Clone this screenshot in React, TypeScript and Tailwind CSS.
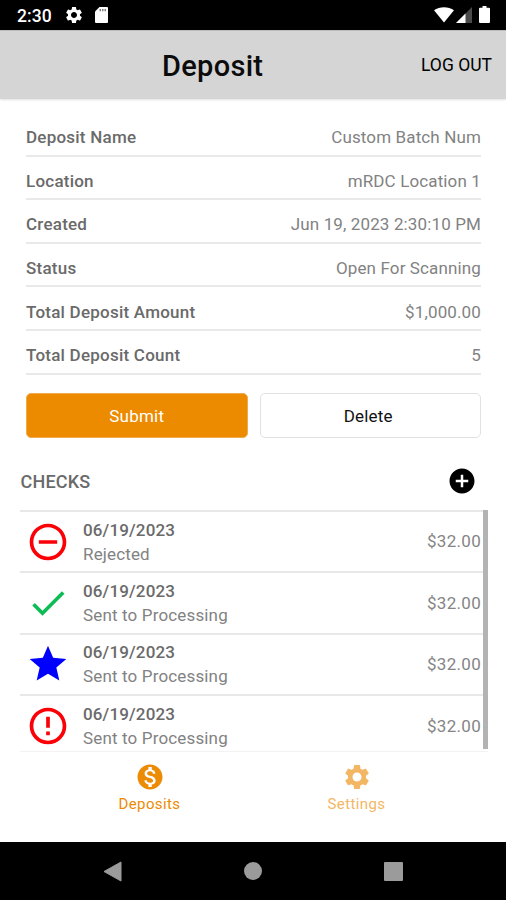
import { clsx } from 'clsx';
import type { IconType } from 'react-icons';
import {
  MdAddCircle,
  MdCheck,
  MdErrorOutline,
  MdMonetizationOn,
  MdRemoveCircleOutline,
  MdSettings,
  MdStar,
} from 'react-icons/md';

const DETAILS = [
  { label: 'Deposit Name', value: 'Custom Batch Num' },
  { label: 'Location', value: 'mRDC Location 1' },
  { label: 'Created', value: 'Jun 19, 2023 2:30:10 PM' },
  { label: 'Status', value: 'Open For Scanning' },
  { label: 'Total Deposit Amount', value: '$1,000.00' },
  { label: 'Total Deposit Count', value: '5' },
];

type Check = {
  icon: IconType;
  color: string;
  date: string;
  status: string;
  amount: string;
};

const CHECKS: Check[] = [
  { icon: MdRemoveCircleOutline, color: 'text-[#fb0007]', date: '06/19/2023', status: 'Rejected', amount: '$32.00' },
  { icon: MdCheck, color: 'text-[#0cbc55]', date: '06/19/2023', status: 'Sent to Processing', amount: '$32.00' },
  { icon: MdStar, color: 'text-[#0000fe]', date: '06/19/2023', status: 'Sent to Processing', amount: '$32.00' },
  { icon: MdErrorOutline, color: 'text-[#fb0007]', date: '06/19/2023', status: 'Sent to Processing', amount: '$32.00' },
];

function StatusBar() {
  return (
    <div className="flex h-[30px] shrink-0 items-center bg-black pl-[17px] pr-4 text-white">
      <span className="w-[47px] pt-[3px] text-[17.5px] font-medium leading-none tracking-[0.1px]">2:30</span>
      <MdSettings size={20} aria-hidden="true" />
      <svg className="ml-[11px] h-4 w-[13px]" viewBox="0 0 13 16" aria-hidden="true">
        <path fill="currentColor" d="M4.5 0H12a1 1 0 0 1 1 1v14a1 1 0 0 1-1 1H1a1 1 0 0 1-1-1V4.5z" />
        <path fill="#000" opacity=".5" d="M4.5 2H6v2.2H4.5zM7 2h1.5v2.2H7zM9.5 2H11v2.2H9.5z" />
      </svg>
      <div className="ml-auto flex items-center">
        <svg className="mb-px h-4 w-5" viewBox="0 0 20 16" aria-hidden="true">
          <path fill="currentColor" d="M10 15.5 0 3.2C5.5-.9 14.5-.9 20 3.2z" />
        </svg>
        <svg className="ml-0.5 h-4 w-4" viewBox="0 0 16 16" aria-hidden="true">
          <path fill="#4a4a4a" d="M0 16 16 0v16z" />
          <path fill="currentColor" d="M0 16 9.5 6.5V16z" />
        </svg>
        <svg className="ml-[7px] mb-px h-[17px] w-[11px]" viewBox="0 0 11 17" aria-hidden="true">
          <path fill="currentColor" d="M3.5 0h4v1.7H10a1 1 0 0 1 1 1V16a1 1 0 0 1-1 1H1a1 1 0 0 1-1-1V2.7a1 1 0 0 1 1-1h2.5z" />
        </svg>
      </div>
    </div>
  );
}

function Header() {
  return (
    <header className="flex h-[69px] shrink-0 items-center justify-between border-t border-[#bdbdbd] bg-[#d5d5d5] pl-[162px] pr-[14px] shadow-[0_1px_2px_rgba(0,0,0,0.12)]">
      <h1 className="pt-[3px] text-[29px] font-medium leading-none tracking-[0.3px] text-[#0c0c0c]">Deposit</h1>
      <button type="button" className="pt-px text-[17.5px] leading-none text-black">
        LOG OUT
      </button>
    </header>
  );
}

function CheckRow({ check }: { check: Check }) {
  const Icon = check.icon;
  return (
    <li className="flex h-[61.4px] items-center border-t-2 border-[#e8e8e8] pl-1.5 pr-[7px]">
      <Icon size={44} className={clsx('shrink-0', check.color)} aria-hidden="true" />
      <div className="ml-[13px] flex-1 leading-6">
        <div className="text-[17px] font-medium tracking-[0.15px] text-[#6a6a6a]">{check.date}</div>
        <div className="text-[17px] tracking-[0.15px] text-[#828282]">{check.status}</div>
      </div>
      <span className="pt-px text-[17px] tracking-[0.3px] text-[#858585]">{check.amount}</span>
    </li>
  );
}

function TabBar() {
  return (
    <nav className="flex h-[90px] shrink-0 px-[46px] pt-2.5">
      <button type="button" className="flex flex-1 flex-col items-center text-[#ec8b04]">
        <MdMonetizationOn size={30} aria-hidden="true" />
        <span className="text-[15px] leading-6 tracking-[0.4px]">Deposits</span>
      </button>
      <button type="button" className="flex flex-1 flex-col items-center text-[#f3b764]">
        <MdSettings size={30} aria-hidden="true" />
        <span className="text-[15px] leading-6 tracking-[0.4px]">Settings</span>
      </button>
    </nav>
  );
}

function SystemNav() {
  return (
    <div className="flex h-[58px] shrink-0 items-center justify-between bg-black px-[103px] text-[#9b9b9b]">
      <svg className="h-[21px] w-[19px]" viewBox="0 0 19 21" aria-hidden="true">
        <path fill="currentColor" stroke="currentColor" strokeLinejoin="round" d="M18 1v19L1 10.5z" />
      </svg>
      <span className="h-[18px] w-[18px] rounded-full bg-[#9b9b9b]" />
      <span className="h-[19px] w-[19px] rounded-[1px] bg-[#9b9b9b]" />
    </div>
  );
}

export default function App() {
  return (
    <div className="flex h-[900px] w-[506px] flex-col overflow-hidden bg-white font-[Roboto,sans-serif]">
      <StatusBar />
      <Header />

      <main className="flex min-h-0 flex-1 flex-col">
        <dl className="ml-[26px] mr-[25px] mt-3.5">
          {DETAILS.map((row) => (
            <div
              key={row.label}
              className="flex h-[43.6px] items-center justify-between border-b-2 border-[#e9e9e9] pt-[7px] text-[17px] leading-6"
            >
              <dt className="font-medium tracking-[0.23px] text-[#6a6a6a]">{row.label}</dt>
              <dd className="tracking-[0.13px] text-[#828282]">{row.value}</dd>
            </div>
          ))}
        </dl>

        <div className="ml-[26px] mr-[25px] mt-[18.4px] grid grid-cols-2 gap-3">
          <button type="button" className="h-[45px] rounded-[5px] border border-[#f0a94b] bg-[#ec8b00] pt-0.5 text-[17px] tracking-[0.2px] text-white">
            Submit
          </button>
          <button type="button" className="h-[45px] rounded-[5px] border border-[#e2e2e2] bg-white pr-1 pt-0.5 text-[17px] tracking-[0.2px] text-[#111]">
            Delete
          </button>
        </div>

        <div className="flex h-[72px] items-center justify-between pl-[20.5px] pr-[29px] pt-[13.5px]">
          <h2 className="pt-px text-[18px] font-medium tracking-[0.2px] text-[#6a6a6a]">CHECKS</h2>
          <button type="button" aria-label="Add check" className="text-black">
            <MdAddCircle size={30} />
          </button>
        </div>

        <div className="relative ml-5 mr-[18px] min-h-0 flex-1 overflow-hidden border-b border-[#f3f3f3]">
          <ul>
            {CHECKS.map((check, i) => (
              <CheckRow key={i} check={check} />
            ))}
          </ul>
          {/* scroll thumb */}
          <div className="absolute right-0 top-0 h-[239px] w-[5px] bg-[#b3b3b3]" />
        </div>
      </main>

      <TabBar />
      <SystemNav />
    </div>
  );
}
